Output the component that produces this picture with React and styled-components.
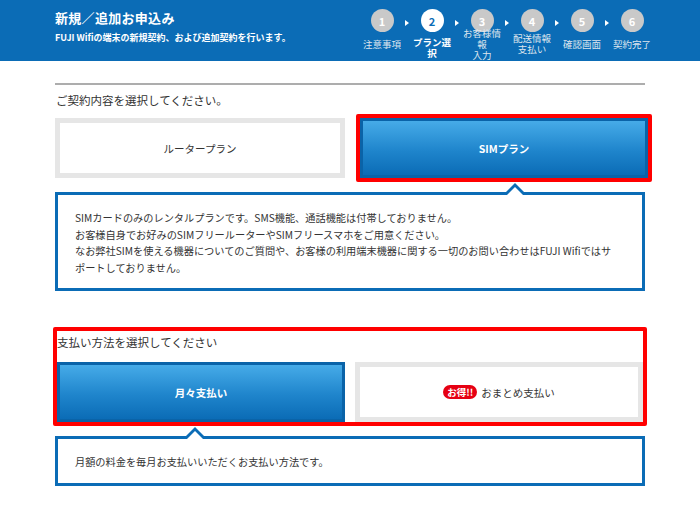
import React from "react";
import styled, { createGlobalStyle } from "styled-components";

const BLUE = "#0b6cb6";
const RED = "#ff0000";

const Global = createGlobalStyle`
  html, body { margin: 0; padding: 0; background: #fff; }
  body { font-family: "Noto Sans CJK JP", "Noto Sans", sans-serif; color: #333; }
  * { box-sizing: border-box; }
`;

const Header = styled.header`
  height: 61px;
  background: ${BLUE};
  display: flex;
  justify-content: space-between;
  padding: 0 48px 0 55px;
  color: #fff;
`;

const HeaderText = styled.div`
  display: flex;
  flex-direction: column;
  padding-top: 9px;
`;

const Title = styled.h1`
  margin: 0;
  font-size: 13px;
  line-height: 18px;
  font-weight: 700;
  letter-spacing: 0.3px;
`;

const Subtitle = styled.p`
  margin: 5px 0 0;
  font-size: 9px;
  line-height: 12px;
  font-weight: 700;
`;

const Steps = styled.ol`
  display: flex;
  margin: 0;
  padding: 0;
  list-style: none;
`;

const Step = styled.li`
  width: 40px;
  display: flex;
  flex-direction: column;
  align-items: center;
`;

const Circle = styled.span`
  margin-top: 9px;
  width: 23px;
  height: 23px;
  border-radius: 50%;
  display: flex;
  align-items: center;
  justify-content: center;
  font-size: 11px;
  font-weight: 700;
  background: ${(p) => (p.$active ? "#fff" : "#c9c9c9")};
  color: ${(p) => (p.$active ? BLUE : "#fff")};
`;

const StepLabel = styled.span`
  height: 24px;
  width: 40px;
  display: flex;
  flex-direction: column;
  justify-content: center;
  text-align: center;
  font-size: 9.5px;
  line-height: 11px;
  padding-top: ${(p) => (p.$active ? "7px" : "0")};
  font-weight: ${(p) => (p.$active ? 700 : 400)};
  color: ${(p) => (p.$active ? "#fff" : "#dfe6ee")};
`;

const Arrow = styled.span`
  width: 10px;
  display: flex;
  justify-content: center;
  padding-top: 20px;
  &::before {
    content: "";
    width: 0;
    height: 0;
    border-left: 4px solid #fff;
    border-top: 3px solid transparent;
    border-bottom: 3px solid transparent;
  }
`;

const Main = styled.main`
  width: 590px;
  margin-left: 55px;
  padding-top: 22px;
  padding-bottom: 20px;
`;

const Divider = styled.hr`
  margin: 0;
  border: 0;
  height: 2px;
  background: #adadad;
`;

const SectionTitle = styled.p`
  margin: 6px 0 0 1px;
  font-size: 11.5px;
  line-height: 18px;
`;

const PlanRow = styled.div`
  margin-top: 5px;
  display: grid;
  grid-template-columns: 290px 296px;
  column-gap: 11px;
  align-items: start;
`;

const RedFrame = styled.div`
  border: 4px solid ${RED};
  border-radius: 2px;
  margin: ${(p) => p.$margin || "0"};
`;

const OptionButton = styled.div`
  height: ${(p) => p.$h || "60px"};
  display: flex;
  align-items: center;
  justify-content: center;
  gap: 4px;
  font-size: 10.5px;
  ${(p) =>
    p.$selected
      ? `
    border: 3px solid #0a63a8;
    background: linear-gradient(#46abe8, #1f85cc 55%, #0b6cb6);
    color: #fff;
    font-weight: 700;
  `
      : `
    border: 5px solid #e6e6e6;
    background: #fff;
    color: #333;
  `}
  margin-top: ${(p) => p.$mt || "0"};
`;

const Balloon = styled.div`
  position: relative;
  margin-top: 10px;
  border: 3px solid ${BLUE};
  background: #fff;
  padding: 15px 17px 12px;
  font-size: 10.2px;
  line-height: 16.5px;
  color: #333;
  &::before,
  &::after {
    content: "";
    position: absolute;
    left: ${(p) => p.$notch - 12}px;
    width: 0;
    height: 0;
    border-left: 12px solid transparent;
    border-right: 12px solid transparent;
  }
  &::before {
    top: -12px;
    border-bottom: 12px solid ${BLUE};
  }
  &::after {
    top: -8px;
    border-bottom: 12px solid #fff;
  }
`;

const Line = styled.span`
  display: block;
  white-space: nowrap;
`;

const PayFrameLabel = styled.p`
  margin: 0;
  padding-top: 1px;
  font-size: 11.5px;
  line-height: 20px;
  color: #333;
`;

const PayRow = styled.div`
  margin-top: 10px;
  display: grid;
  grid-template-columns: 1fr 1fr;
  column-gap: 10px;
`;

const Badge = styled.span`
  background: #e60012;
  color: #fff;
  font-weight: 700;
  font-size: 9.5px;
  line-height: 14px;
  padding: 0 4px;
  border-radius: 7px;
`;

const steps = [
  { n: 1, label: "注意事項" },
  { n: 2, label: "プラン選択", active: true },
  { n: 3, label: ["お客様情報", "入力"] },
  { n: 4, label: ["配送情報", "支払い"] },
  { n: 5, label: "確認画面" },
  { n: 6, label: "契約完了" },
];

export default function App() {
  return (
    <>
      <Global />
      <Header>
        <HeaderText>
          <Title>新規／追加お申込み</Title>
          <Subtitle>FUJI Wifiの端末の新規契約、および追加契約を行います。</Subtitle>
        </HeaderText>
        <Steps>
          {steps.map((s, i) => (
            <React.Fragment key={s.n}>
              {i > 0 && <Arrow />}
              <Step>
                <Circle $active={s.active}>{s.n}</Circle>
                <StepLabel $active={s.active}>
                  {Array.isArray(s.label)
                    ? s.label.map((l) => <span key={l}>{l}</span>)
                    : s.label}
                </StepLabel>
              </Step>
            </React.Fragment>
          ))}
        </Steps>
      </Header>
      <Main>
        <Divider />
        <SectionTitle>ご契約内容を選択してください。</SectionTitle>
        <PlanRow>
          <OptionButton $mt="4px">ルータープラン</OptionButton>
          <RedFrame>
            <OptionButton $selected>SIMプラン</OptionButton>
          </RedFrame>
        </PlanRow>
        <Balloon $notch={457}>
          <Line>SIMカードのみのレンタルプランです。SMS機能、通話機能は付帯しておりません。</Line>
          <Line>お客様自身でお好みのSIMフリールーターやSIMフリースマホをご用意ください。</Line>
          <Line>なお弊社SIMを使える機器についてのご質問や、お客様の利用端末機器に関する一切のお問い合わせはFUJI Wifiではサ</Line>
          <Line>ポートしておりません。</Line>
        </Balloon>
        <RedFrame $margin="36px -2px 0">
          <PayFrameLabel>支払い方法を選択してください</PayFrameLabel>
          <PayRow>
            <OptionButton $selected>月々支払い</OptionButton>
            <OptionButton>
              <Badge>お得!!</Badge>
              おまとめ支払い
            </OptionButton>
          </PayRow>
        </RedFrame>
        <Balloon $notch={137}>
          <Line>月額の料金を毎月お支払いいただくお支払い方法です。</Line>
        </Balloon>
      </Main>
    </>
  );
}
